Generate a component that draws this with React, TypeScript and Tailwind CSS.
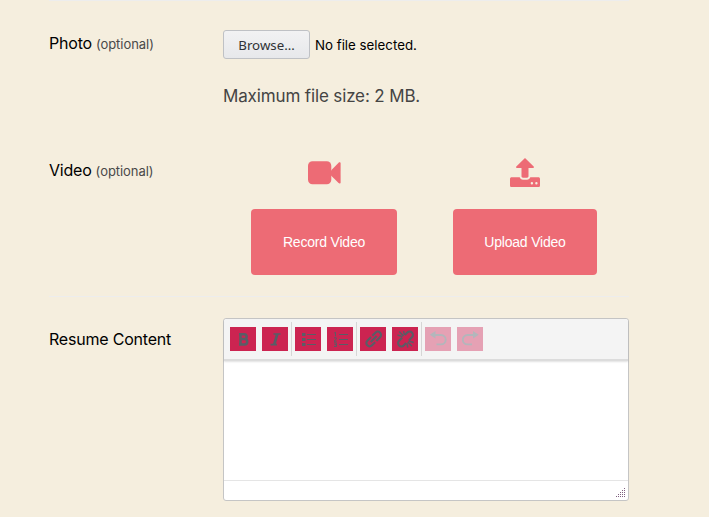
import type { ReactNode } from "react";

function Label({ text, optional = false }: { text: string; optional?: boolean }) {
  return (
    <div className="w-[174px] shrink-0 text-[16px] leading-6 tracking-[-0.21px] text-black">
      {text}
      {optional && <small className="ml-1 text-[13px] tracking-[-0.05px] text-[#494949]">(optional)</small>}
    </div>
  );
}

function Tool({ name, disabled = false, children }: { name: string; disabled?: boolean; children: ReactNode }) {
  return (
    <button
      aria-label={name}
      disabled={disabled}
      className="flex h-6 w-[26px] shrink-0 items-center justify-center bg-[#cc2451] text-[#595d66] disabled:bg-[#e5a1b4] disabled:text-[#b3b6bb]"
    >
      <svg className="shrink-0" width="20" height="20" viewBox="0 0 20 20" fill="none" stroke="currentColor" strokeWidth="2">
        {children}
      </svg>
    </button>
  );
}

function Separator() {
  return <div className="mx-[3px] h-[34px] w-px shrink-0 bg-[#d6d6d6]" />;
}

function Toolbar() {
  return (
    <div className="flex h-[42px] items-center rounded-t-sm border-b-2 border-[#dcdcdc] bg-[#f4f4f4] pl-1.5 shadow-[0_1px_2px_rgba(0,0,0,0.12)]">
      <Tool name="Bold">
        <path d="M7.5 4v12.6M6 5.2h5.2a2.4 2.4 0 0 1 0 4.9H8M8 10.1h3.6a2.6 2.6 0 0 1 0 5.3H6" strokeWidth="2.5" />
      </Tool>
      <div className="w-1.5" />
      <Tool name="Italic">
        <path d="M8.5 5h7M5.5 15.6h6.5" strokeWidth="1.6" />
        <path d="M12.3 5L9.2 15.6" strokeWidth="2.7" />
      </Tool>
      <Separator />
      <Tool name="Bulleted list">
        <path d="M9 5.5h9M9 10.5h9M9 15.5h9" strokeWidth="1.2" />
        <path d="M4 5.5h3.500M4 10.5h3.500M4 15.5h3.500" strokeWidth="3" />
      </Tool>
      <div className="w-1.5" />
      <Tool name="Numbered list">
        <path d="M9 5.5h9M9 10.5h9M9 15.5h9" strokeWidth="1.2" />
        <path d="M4.200 4l1.300-.700v4M4 8.800h2.300v1.500L4 12.200h2.700M4 13.800h2.400v3.700H4M4.500 15.600h1.800" strokeWidth="1" />
      </Tool>
      <Separator />
      <Tool name="Link">
        <g transform="rotate(-45 10.7 10)" strokeWidth="2.1">
          <path d="M10.2 6.7H5a3.3 3.3 0 0 0 0 6.6h4.4M12 6.7h4.4a3.3 3.3 0 0 1 0 6.6h-5.2M6.5 10h8.4" />
        </g>
      </Tool>
      <div className="w-1.5" />
      <Tool name="Unlink">
        <g transform="rotate(-45 10.5 10)" strokeWidth="2.1">
          <path d="M9 6.7H4.7a3.3 3.3 0 0 0 0 6.6H8M13 6.7h3.3a3.3 3.3 0 0 1 0 6.6H12" />
        </g>
        <path d="M2.5 6l5 1.6M4.2 2.5L8.5 7M8.5 2l1 4M11.8 14l1 4.5M12.8 13l4.2 4.3M13.7 12l5 1.5" strokeWidth="1.5" />
      </Tool>
      <Separator />
      <Tool name="Undo" disabled>
        <path d="M7 6h6a4.7 4.7 0 0 1 0 9.4H8.500" strokeWidth="1.9" />
        <path d="M7.500 2v7.600L1.800 5.800z" fill="currentColor" stroke="none" />
      </Tool>
      <div className="w-1.5" />
      <Tool name="Redo" disabled>
        <path d="M13.5 6h-6a4.7 4.7 0 0 0 0 9.4H12" strokeWidth="1.9" />
        <path d="M13 2v7.600L18.700 5.800z" fill="currentColor" stroke="none" />
      </Tool>
    </div>
  );
}

function CameraIcon() {
  return (
    <svg width="33" height="30" viewBox="0 0 33 30" fill="currentColor">
      <rect x="0" y="3.2" width="23.3" height="23" rx="4.5" />
      <path d="M23 12.4l7.6-7.7c.8-.8 2-.5 2 .6v19.2c0 1.1-1.2 1.4-2 .6L23 17.5z" />
    </svg>
  );
}

function UploadIcon() {
  return (
    <svg width="30" height="30" viewBox="0 0 30 30" fill="currentColor">
      <path d="M15 0l8.7 8.6c.5.6.3 1.4-.6 1.4h-4.6v8.3c0 .8-.6 1.4-1.4 1.4h-4.2c-.8 0-1.4-.6-1.4-1.4V10H6.9c-.9 0-1.1-.8-.6-1.4L15 0z" />
      <path
        fillRule="evenodd"
        d="M1.6 19.3h8.1c.5 1.6 1.7 2.500 3.300 2.500h4c1.600 0 2.800-.9 3.300-2.500h8.100c.9 0 1.600.7 1.600 1.600v6.500c0 .9-.7 1.600-1.600 1.600H1.600C.7 29 0 28.300 0 27.400v-6.500c0-.9.7-1.600 1.600-1.600zM20.700 25.300a1.200 1.200 0 1 0 2.400 0a1.200 1.200 0 1 0-2.400 0zM25.200 25.300a1.200 1.200 0 1 0 2.400 0a1.200 1.200 0 1 0-2.400 0z"
      />
    </svg>
  );
}

const gripDots = [0, 1, 2, 3, 4].flatMap((row) =>
  Array.from({ length: row + 1 }, (_, i) => ({ x: 8 - i * 2, y: row * 2 })),
);

export default function App() {
  return (
    <main className="h-[517px] w-[709px] overflow-hidden bg-[#f5eede] pl-[49px] font-['Inter',sans-serif]">
      <div className="w-[580px]">
        <section className="flex h-[127px] border-t border-[#ededed] pt-[29px]">
          <div className="pt-[1px]">
            <Label text="Photo" optional />
          </div>
          <div>
            <div className="flex items-center">
              <button className="h-[29px] w-[87px] rounded-[3px] border border-[#bfc1c5] bg-linear-to-b from-[#f2f2f3] to-[#e7e8eb] pt-[2px] font-['Noto_Sans',sans-serif] text-[13.3px] text-[#303236]">
                Browse…
              </button>
              <span className="ml-[5px] pt-[2px] text-[13.3px] text-black">No file selected.</span>
            </div>
            <p className="mt-[23px] text-[17px] leading-7 tracking-[-0.14px] text-[#444]">Maximum file size: 2 MB.</p>
          </div>
        </section>
        <section className="flex h-[170px] border-b border-[#ededed] pt-[31px]">
          <Label text="Video" optional />
          <div className="flex pl-[28px] font-['Liberation_Sans',sans-serif] text-[14px] tracking-[-0.2px] text-[#ed6b75]">
            <div className="flex w-[146px] flex-col items-center">
              <CameraIcon />
              <button className="mt-[21px] h-[66px] w-full rounded-[4px] bg-[#ed6b75] pt-px text-white">Record Video</button>
            </div>
            <div className="ml-[56px] flex w-[144px] flex-col items-center">
              <UploadIcon />
              <button className="mt-[21px] h-[66px] w-full rounded-[4px] bg-[#ed6b75] pt-px text-white">Upload Video</button>
            </div>
          </div>
        </section>
        <section className="flex pt-[21px]">
          <div className="pt-[9px]">
            <Label text="Resume Content" />
          </div>
          <div className="flex h-[183px] w-[406px] flex-col rounded-[3px] border border-[#c5c5c5] bg-white">
            <Toolbar />
            <div className="flex-1" />
            <div className="flex h-5 items-end justify-end border-t border-[#e5e5e5] pr-[3px] pb-[3px]">
              <svg width="9" height="9" viewBox="0 0 9 9" fill="#806180" shapeRendering="crispEdges">
                {gripDots.map((dot) => (
                  <rect key={`${dot.x}-${dot.y}`} x={dot.x} y={dot.y} width="1" height="1" />
                ))}
              </svg>
            </div>
          </div>
        </section>
      </div>
    </main>
  );
}
